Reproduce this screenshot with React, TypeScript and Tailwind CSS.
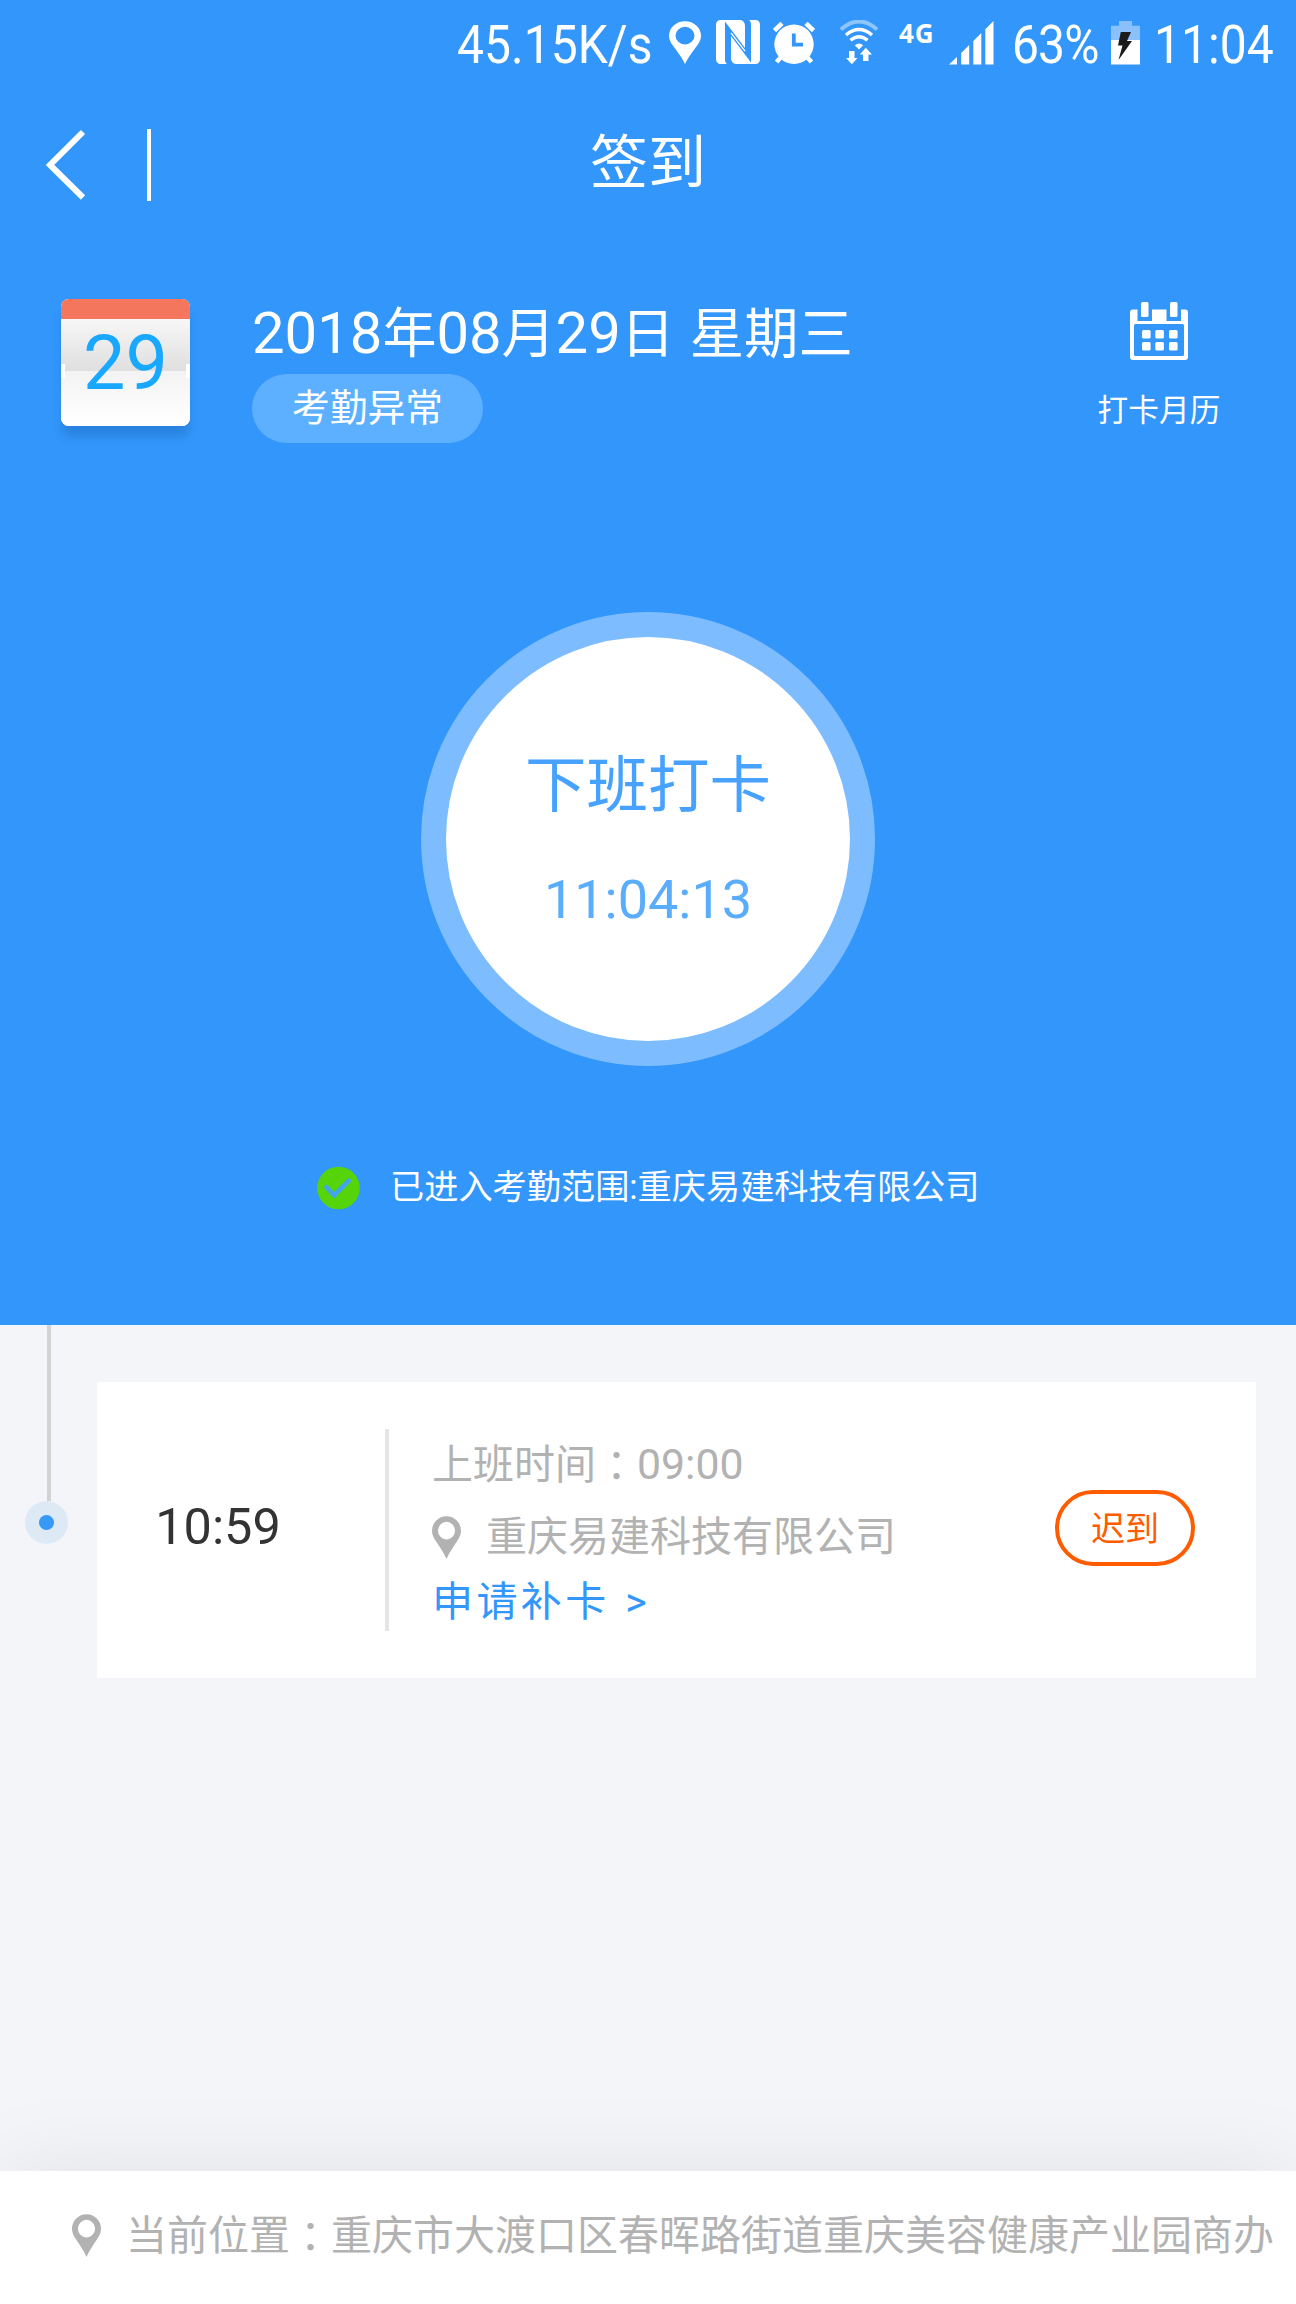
import type { ReactNode } from "react";

const BLUE = "#3296fb";

function StatusText({ children, className }: { children: ReactNode; className: string }) {
  return (
    <div className={`flex h-[64px] shrink-0 ${className}`}>
      <div className="origin-left scale-x-[0.89] whitespace-nowrap text-[54px] leading-[64px]">{children}</div>
    </div>
  );
}

function PinIcon({ className }: { className: string }) {
  return (
    <svg viewBox="0 0 29 43" preserveAspectRatio="none" className={className} fill="currentColor">
      <path
        fillRule="evenodd"
        d="M14.5 43 C11.5 36 7.5 30.5 3.5 24.5 C1.4 21.4 0 18.5 0 14.8 A14.5 14.6 0 0 1 29 14.8 C29 18.5 27.6 21.4 25.5 24.5 C21.5 30.5 17.5 36 14.5 43Z M14.5 5.8 A8.6 8.8 0 1 0 14.5 23.4 A8.6 8.8 0 1 0 14.5 5.8Z"
      />
    </svg>
  );
}

function NfcIcon() {
  const half = "M5 0 H24.5 Q29 1 29 6 V28 L9 1.5 V39 Q9 43 11 44 H5 Q0 44 0 39 V5 Q0 0 5 0Z";
  return (
    <svg viewBox="0 0 44 44" className="ml-[15px] mt-[20px] h-[44px] w-[44px] shrink-0" fill="#fff">
      <path d={half} />
      <path d={half} transform="rotate(180 22 22)" />
      <path d="M15 12.8 L29 31.2" stroke="#fff" strokeWidth="1.4" />
    </svg>
  );
}

function AlarmIcon() {
  return (
    <svg viewBox="0 0 42 44" className="ml-[13px] mt-[20.5px] h-[44px] w-[42px] shrink-0">
      <circle cx="21" cy="23.3" r="19.7" fill="#fff" />
      <path d="M1.5 9.5 L9 2.3 M33 2.3 L40.5 9.5" stroke="#fff" strokeWidth="4.6" />
      <path d="M9 35 L3.5 41 M33 35 L38.5 41" stroke="#fff" strokeWidth="4.6" />
      <path d="M20.8 12.5 V23.7 H30" fill="none" stroke={BLUE} strokeWidth="3.8" />
    </svg>
  );
}

function WifiIcon() {
  return (
    <svg viewBox="0 0 38 44" className="ml-[25px] mt-[20px] h-[44px] w-[38px] shrink-0">
      <g fill="none" strokeWidth="3.4">
        <path d="M1 9.5 Q19 -6.5 37 9.5" stroke="#fff" strokeOpacity=".45" strokeWidth="4" />
        <path d="M6 15 Q19 4 32 15" stroke="#fff" />
        <path d="M10.5 20.3 Q19 13 27.5 20.3" stroke="#fff" />
      </g>
      <path d="M14.8 25.2 Q19 21.6 23.2 25.2 L19 29.5Z" fill="#fff" />
      <path d="M9 31 H14.5 V38 H17.5 L11.8 44.3 L6 38 H9Z" fill="#fff" />
      <path d="M23 41 H28.5 V34.5 H32 L25.8 27.8 L19.8 34.5 H23Z" fill="#fff" />
    </svg>
  );
}

function SignalIcon() {
  return (
    <svg viewBox="0 0 45 44" className="ml-[15px] mt-[20.5px] h-[44px] w-[45px] shrink-0" fill="#fff">
      <path d="M0 43.5 L8 36 V43.5Z M12.2 43.5 V32 L20.2 24 V43.5Z M24.3 43.5 V20 L32.3 12 V43.5Z M36.3 43.5 V8.2 L44.5 0 V43.5Z" />
    </svg>
  );
}

function BatteryIcon() {
  return (
    <svg viewBox="0 0 29 44" className="mt-[20.5px] h-[44px] w-[29px] shrink-0">
      <path d="M0 19 V4.8 H8 V0 H21 V4.8 H29 V19Z" fill="#8ac1fd" />
      <rect y="19" width="29" height="24.5" fill="#fff" />
      <path d="M9.8 11 H20 L16 20 H21 L7.5 39 L11.5 24.5 H7Z" fill="#1b1b1b" />
    </svg>
  );
}

function StatusBar() {
  return (
    <div className="flex h-[86px] items-start pl-[457px]">
      <StatusText className="mt-[13px] w-[212px]">45.15K/s</StatusText>
      <PinIcon className="mt-[21px] h-[43px] w-[32px] shrink-0" />
      <NfcIcon />
      <AlarmIcon />
      <WifiIcon />
      <span className="ml-[21px] mt-[15px] w-[35px] shrink-0 font-['Noto_Sans'] text-[26px] font-bold leading-9 tracking-[1px]">
        4G
      </span>
      <SignalIcon />
      <StatusText className="ml-[18px] mt-[13px] w-[99px]">
        <span className="tracking-[-1px]">63%</span>
      </StatusText>
      <BatteryIcon />
      <StatusText className="ml-[14px] mt-[13px] w-[130px]">11:04</StatusText>
    </div>
  );
}

function TitleBar() {
  return (
    <div className="grid h-[154px] grid-cols-[1fr_auto_1fr] items-start">
      <div className="flex pl-[44px] pt-[43px]">
        <svg viewBox="0 0 44 72" className="h-[72px] w-[44px]" fill="none" stroke="#fff" strokeWidth="6">
          <path d="M39 3 L6 36 L39 68.5" />
        </svg>
        <span className="ml-[59px] h-[72px] w-[4px] bg-white" />
      </div>
      <h1 className="pt-[42px] text-[58px] font-normal leading-[70px]">签到</h1>
    </div>
  );
}

function DateCard() {
  return (
    <div className="relative mt-[59px] h-[127px] w-[129px] shrink-0 rounded-[8px] bg-white shadow-[0_12px_10px_-2px_rgba(20,70,130,0.25)]">
      <div className="h-[20px] rounded-t-[8px] bg-[#f4765c]" />
      <div className="h-[52px] bg-linear-to-b from-[#f7f7f7] to-[#dfdfdf]" />
      <div className="h-[55px] rounded-b-[8px] bg-linear-to-b from-[#f3f3f3] to-white" />
      <span className="absolute left-0 top-[65px] h-[14px] w-[4px] bg-white" />
      <span className="absolute right-0 top-[65px] h-[14px] w-[4px] bg-white" />
      <span className="absolute inset-x-0 top-[19px] text-center text-[75.5px] leading-[90px] text-[#18a8ff]">29</span>
    </div>
  );
}

function MonthIcon() {
  return (
    <svg viewBox="0 0 58 58" className="h-[58px] w-[58px]" fill="#fff">
      <path
        fillRule="evenodd"
        d="M3 7.5 H7.5 V19 H22 V7.5 H36.5 V19 H51 V7.5 H55 Q58 7.5 58 10.5 V55 Q58 58 55 58 H3 Q0 58 0 55 V10.5 Q0 7.5 3 7.5Z M5.5 22 Q4 22 4 23.5 V52.5 Q4 54 5.5 54 H52.5 Q54 54 54 52.5 V23.5 Q54 22 52.5 22Z"
      />
      <rect x="11" y="0" width="7.5" height="15" rx="1.5" />
      <rect x="40" y="0" width="7.5" height="15" rx="1.5" />
      {[12, 25.3, 39].map((x) =>
        [28, 40].map((y) => <rect key={`${x}-${y}`} x={x} y={y} width="8.6" height="8.6" rx="1.5" />),
      )}
    </svg>
  );
}

function DateHeader() {
  return (
    <div className="flex h-[372px] items-start pl-[61px]">
      <DateCard />
      <div className="ml-[62px] pt-[58px]">
        <div className="flex h-[70px] whitespace-pre text-[54px] leading-[70px]">
          <p>
            <span className="text-[58px]">2018</span>年<span className="text-[58px]">08</span>月
            <span className="text-[58px]">29</span>日<span className="text-[60px]"> </span>
            <span className="text-[54.4px]">星期三</span>
          </p>
        </div>
        <div className="mt-[6px] flex h-[69px] w-[231px] justify-center rounded-full bg-[#5cb0ff] text-[37.7px] leading-[69px]">
          考勤异常
        </div>
      </div>
      <div className="ml-auto mr-[75px] flex w-[124px] flex-col items-center pt-[62px]">
        <MonthIcon />
        <span className="mt-[31px] whitespace-nowrap text-[30.7px] leading-[40px]">打卡月历</span>
      </div>
    </div>
  );
}

function PunchButton() {
  return (
    <button className="mx-auto flex h-[454px] w-[454px] flex-col items-center rounded-full border-[25px] border-[#7cbcff] bg-white">
      <span className="mt-[109px] text-[61.5px] leading-[80px] text-[#46a2fe]">下班打卡</span>
      <span className="mt-[42px] text-[54px] leading-[64px] text-[#5aacfd]">11:04:13</span>
    </button>
  );
}

function RangeNotice() {
  return (
    <div className="mt-[100px] flex h-[44px] items-start pl-[317px]">
      <svg viewBox="0 0 44 44" className="h-[44px] w-[43px]">
        <circle cx="22" cy="22" r="21.8" fill="#55d40a" />
        <path d="M9.5 21 L17.5 29.5 L32.5 14.5" fill="none" stroke="#41a4ef" strokeWidth="4.6" strokeLinecap="round" />
      </svg>
      <span className="ml-[30px] whitespace-nowrap text-[34.2px] leading-[42px]">
        已进入考勤范围:重庆易建科技有限公司
      </span>
    </div>
  );
}

function WideColon() {
  return <span className="relative top-[2px] font-['Noto_Sans_CJK_TC'] leading-none">：</span>;
}

function TimelineEntry() {
  return (
    <div className="flex items-start">
      <div className="flex w-[97px] flex-col pl-[25px]">
        <span className="ml-[22px] h-[176px] w-[3.5px] bg-[#d3d3d3]" />
        <span className="flex h-[43px] w-[43px] items-center justify-center rounded-full bg-[#ddeaf6]">
          <span className="h-[15px] w-[15px] rounded-full bg-[#3699f7]" />
        </span>
      </div>
      <div className="mt-[57px] flex h-[296px] w-[1159px] items-start bg-white">
        <div className="w-[288px] pr-[46px] pt-[113px] text-center text-[50.4px] leading-[64px] text-[#333]">10:59</div>
        <span className="mt-[47px] h-[202px] w-[4px] bg-[#e5e5e5]" />
        <div className="ml-[43px] text-[41px] text-[#b2b2b2]">
          <p className="mt-[57px] h-[52px] leading-[52px]">
            上班时间
            <WideColon />
            <span className="text-[42.8px] leading-none">09:00</span>
          </p>
          <p className="mt-[19px] flex items-center leading-[54px]">
            <PinIcon className="mr-[25px] h-[43px] w-[29px]" />
            重庆易建科技有限公司
          </p>
          <p className="mt-[12px] tracking-[3.4px] leading-[52px] text-[#3296fa]">
            申请补卡 <span className="ml-[2px]">&gt;</span>
          </p>
        </div>
        <span className="ml-auto mr-[61px] mt-[108px] flex h-[76px] w-[140px] justify-center rounded-full border-4 border-[#ff5c00] text-[34px] leading-[70px] text-[#ff5c00]">
          迟到
        </span>
      </div>
    </div>
  );
}

function LocationBar() {
  return (
    <footer className="mt-auto flex h-[133px] items-start bg-white pl-[72px] pt-[43px] text-[#b2b2b2] shadow-[0_0_90px_rgba(0,0,20,0.08)]">
      <PinIcon className="h-[43px] w-[29px] shrink-0" />
      <span className="ml-[25px] -mt-[4px] h-[52px] whitespace-nowrap text-[41px] leading-[52px]">
        当前位置
        <WideColon />
        重庆市大渡口区春晖路街道重庆美容健康产业园商办
      </span>
    </footer>
  );
}

export default function App() {
  return (
    <div className="flex h-[2304px] w-[1296px] flex-col overflow-hidden bg-[#f4f5f9] font-[Roboto,'Noto_Sans_CJK_SC',sans-serif]">
      <header className="h-[1325px] shrink-0 bg-[#3296fb] text-white">
        <StatusBar />
        <TitleBar />
        <DateHeader />
        <PunchButton />
        <RangeNotice />
      </header>
      <TimelineEntry />
      <LocationBar />
    </div>
  );
}
